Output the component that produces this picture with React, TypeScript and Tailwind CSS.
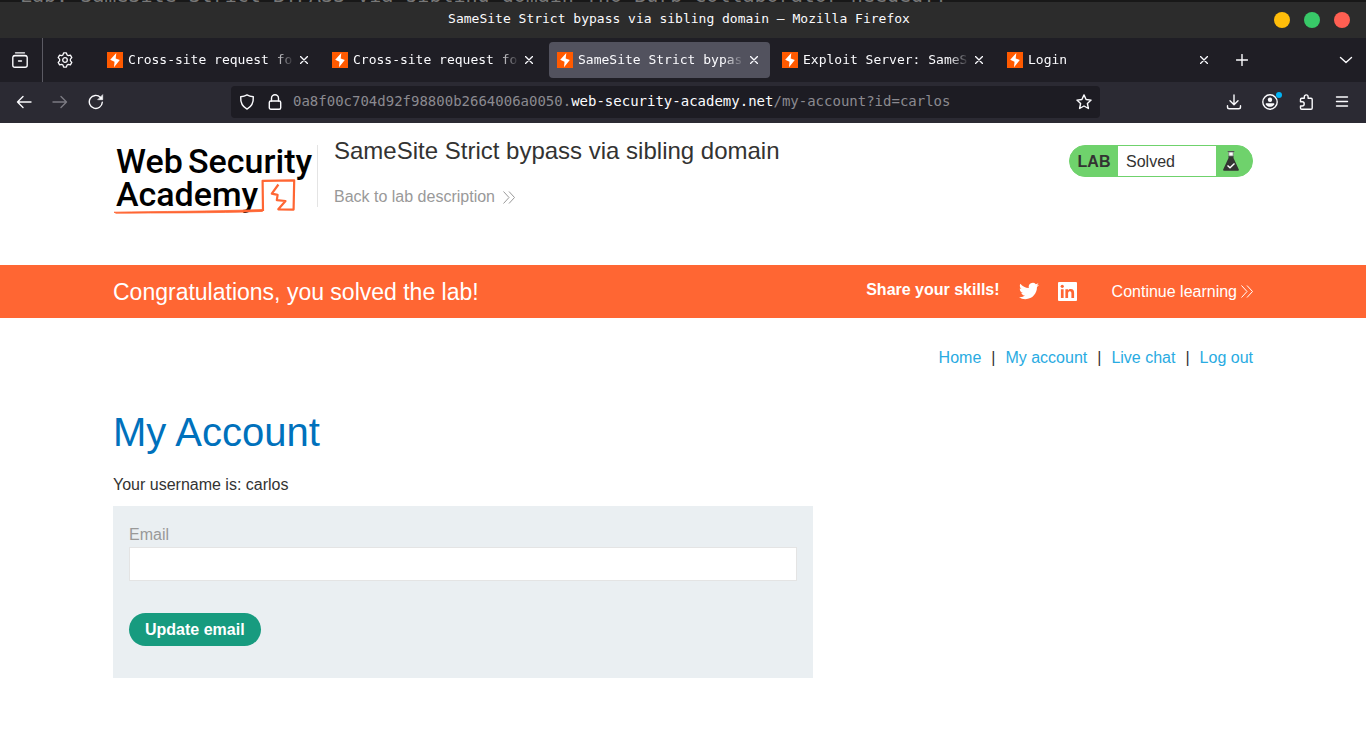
import React from "react";

const tabs = [
  { title: "Cross-site request fo", active: false },
  { title: "Cross-site request fo", active: false },
  { title: "SameSite Strict bypas", active: true },
  { title: "Exploit Server: SameS", active: false },
  { title: "Login", active: false },
];

const iconProps = {
  fill: "none",
  stroke: "currentColor",
  strokeWidth: 1.4,
  strokeLinecap: "round" as const,
  strokeLinejoin: "round" as const,
  "aria-hidden": true,
};

function Icon({ children }: { children: React.ReactNode }) {
  return (
    <svg viewBox="0 0 16 16" className="size-4 shrink-0" {...iconProps}>
      {children}
    </svg>
  );
}

function IconButton({ label, className = "", children }: { label: string; className?: string; children: React.ReactNode }) {
  return (
    <button type="button" aria-label={label} className={"flex size-8 shrink-0 items-center justify-center " + className}>
      {children}
    </button>
  );
}

function Favicon() {
  return (
    <svg viewBox="0 0 16 16" className="size-4 shrink-0" aria-hidden="true">
      <rect width="16" height="16" fill="#ff5a00" />
      <path d="M9.300 1 8.700 6.400 12.800 8.100 7 15.200 7.500 9.800 3.200 7.700z" fill="#fff" />
    </svg>
  );
}

function Chevrons() {
  return (
    <svg viewBox="0 0 12 13" className="h-[13px] w-3 shrink-0" fill="none" stroke="currentColor" strokeWidth="1" aria-hidden="true">
      <path d="M.5.500 6 6.500.5 12.500M6 .5l5.500 6-5.500 6" />
    </svg>
  );
}

function TabStrip() {
  return (
    <div className="flex h-11 items-center bg-[#1f1e25]">
      <div className="flex h-full w-[43px] shrink-0 items-center border-r border-[#5b5a63] pl-1">
        <IconButton label="View recent browsing">
          <Icon>
            <path d="M3.500.800h9M1.500 4.200C1.700 3.600 2.300 3.300 3 3.300h10c.7 0 1.300.3 1.500.9" strokeWidth="1.300" />
            <path d="M.8 5.500q0-1.600 1.600-1.600h11.200q1.600 0 1.600 1.600v7.800q0 2-2 2H2.800q-2 0-2-2z" />
            <path d="M6.500 9h3" />
          </Icon>
        </IconButton>
      </div>
      <IconButton label="Pinned settings tab" className="ml-1.5 mr-4">
        <Icon>
          <path d="M6.600.9h2.800l.6 2 1.400.8 2-.5 1.400 2.400-1.400 1.500v1.800l1.400 1.500-1.400 2.400-2-.5-1.400.8-.6 2H6.600l-.6-2-1.400-.8-2 .5-1.400-2.400 1.400-1.500V7.100L1.200 5.600l1.400-2.400 2 .5L6 2.900z" strokeWidth="1.300" />
          <circle cx="8" cy="8" r="2.300" strokeWidth="1.300" />
        </Icon>
      </IconButton>
      <div role="tablist" className="flex min-w-0 flex-1 items-center">
        {tabs.map((tab, i) => (
          <div
            key={i}
            className={
              "mx-0.5 flex h-9 min-w-0 max-w-[221px] flex-1 items-center rounded pl-2 pr-1.5 " +
              (tab.active ? "bg-[#52525e]" : "")
            }
          >
            <button type="button" role="tab" aria-selected={tab.active} className="flex min-w-0 flex-1 items-center gap-[5px]">
              <Favicon />
              <span className="min-w-0 flex-1 overflow-hidden whitespace-nowrap text-left text-[13px] leading-5 [mask-image:linear-gradient(to_right,black_calc(100%-20px),transparent)]">
                {tab.title}
              </span>
            </button>
            <button type="button" aria-label="Close tab" className="flex size-5 shrink-0 items-center justify-center">
              <svg viewBox="0 0 8 8" className="size-2" {...iconProps}>
                <path d="m.5.500 7 7m0-7-7 7" />
              </svg>
            </button>
          </div>
        ))}
        <IconButton label="Open a new tab" className="ml-1">
          <svg viewBox="0 0 12 12" className="size-3" {...iconProps}>
            <path d="M6 .500v11M.500 6h11" />
          </svg>
        </IconButton>
      </div>
      <IconButton label="List all tabs" className="mr-1">
        <Icon>
          <path d="m2.500 5.500 5.500 5 5.500-5" />
        </Icon>
      </IconButton>
    </div>
  );
}

function Toolbar() {
  return (
    <div className="flex h-[41px] items-start bg-[#2b2a33] px-2 pt-1">
      <div className="flex gap-1">
        <IconButton label="Back">
          <Icon><path d="M15 8H1.500M7 2.500 1.500 8 7 13.500" /></Icon>
        </IconButton>
        <IconButton label="Forward" className="text-[#7b7a82]">
          <Icon><path d="M1 8h13.500M9 2.500 14.500 8 9 13.500" /></Icon>
        </IconButton>
        <IconButton label="Reload">
          <Icon>
            <path d="M14.300 8.200A6.500 6.500 0 1 1 12.500 3.400" />
            <path d="M14.700 1v4.700H10z" fill="currentColor" strokeWidth=".6" />
          </Icon>
        </IconButton>
      </div>
      <div className="ml-[119px] mr-[118px] flex h-8 min-w-0 flex-1 items-center rounded bg-[#1d1c23] pr-2">
        <span className="flex w-[62px] shrink-0 items-center gap-3 pl-2">
          <Icon><path d="M8 .9c2 1.200 4.300 1.700 6.300 1.900.3 5.200-1.700 9.900-6.300 12.300C3.400 12.700 1.400 8 1.700 2.800 3.700 2.600 6 2.100 8 .9z" /></Icon>
          <Icon>
            <rect x="2.300" y="7" width="11.400" height="8.200" rx="1.500" />
            <path d="M4.500 7V4.300a3.500 3.500 0 0 1 7 0V7" />
          </Icon>
        </span>
        <span className="min-w-0 flex-1 overflow-hidden whitespace-nowrap pb-0.5 text-[14px] leading-5 text-[#8b8a90]">
          0a8f00c704d92f98800b2664006a0050.<span className="text-[#fbfbfe]">web-security-academy.net</span>/my-account?id=carlos
        </span>
        <button type="button" aria-label="Bookmark this page">
          <Icon><path d="m8 .900 2.100 4.600 5 .6-3.700 3.400 1 5L8 12l-4.400 2.500 1-5L.9 6.100l5-.6z" /></Icon>
        </button>
      </div>
      <div className="flex gap-1">
        <IconButton label="Downloads">
          <Icon><path d="M8 1v9.500M4 6.800l4 4 4-4M1.500 11.800v1.200q0 1.800 1.800 1.800h9.400q1.800 0 1.800-1.800v-1.200" /></Icon>
        </IconButton>
        <IconButton label="Account" className="relative">
          <Icon>
            <circle cx="8" cy="8" r="7.200" />
            <circle cx="8" cy="5.800" r="2.200" fill="currentColor" stroke="none" />
            <path d="M3.800 9.300h8.400v1.200c-1 1.600-2.500 2.300-4.200 2.300s-3.200-.7-4.200-2.300z" fill="currentColor" stroke="none" />
          </Icon>
          <span className="absolute right-1 top-1.5 size-1.5 rounded-full bg-[#00b3f4]" />
        </IconButton>
        <IconButton label="Extensions">
          <Icon><path d="M2.500 7V5.500q0-1.200 1.200-1.200h2.600V2.800a1.900 1.900 0 0 1 3.800 0v1.500h2.900q1.200 0 1.200 1.200v8.500q0 1.200-1.200 1.200H3.700q-1.200 0-1.200-1.200v-2h1.600a2 2 0 0 0 0-4.200H2.500z" /></Icon>
        </IconButton>
        <IconButton label="Open application menu">
          <Icon><path d="M2.500 3h11M2.500 7.500h11M2.500 12h11" /></Icon>
        </IconButton>
      </div>
    </div>
  );
}

function AcademyLogo() {
  return (
    <a href="#academy" aria-label="Web Security Academy" className="block">
      <svg viewBox="0 0 205 72" className="h-[72px] w-[205px]" aria-hidden="true">
        <g fill="#000" fontFamily="Roboto, sans-serif" fontWeight="500" fontSize="34">
          <text x="3" y="28">Web</text>
          <text x="75" y="28">Security</text>
          <text x="3" y="61">Academy</text>
        </g>
        <path d="M1 67.200c45-.9 97-.7 148.500-2.700v1.900C101 68.300 47 67.700 3 68.200z" fill="#ff6633" stroke="#ff6633" strokeWidth=".8" />
        <path d="M150 66 149.600 35.800 181.200 35.300 180.600 64.600 165.300 64.300 172.500 56 163.800 55.200 164.600 49.800 158.800 48.600 165.400 39.500" fill="none" stroke="#ff6633" strokeWidth="2.200" strokeLinejoin="round" />
      </svg>
    </a>
  );
}

export default function App() {
  return (
    <div className="min-h-screen bg-white font-['Liberation_Sans',Arial,sans-serif] text-base text-[#333332]">
      <div className="font-['DejaVu_Sans_Mono','Liberation_Mono',monospace] text-[#fbfbfe]">
        <div className="flex h-0.5 items-end overflow-hidden bg-[#181818] pl-5" aria-hidden="true">
          <span className="whitespace-nowrap text-[20px] leading-[14px] text-[#777]">
            Lab: SameSite Strict BYPASS via sibling domain [no Burp Collaborator needed!!
          </span>
        </div>
        <div className="flex h-9 items-center bg-[#2c2c2c] pr-4">
          <div className="flex-1 pb-0.5 pl-[84px] text-center text-[13px] leading-5">SameSite Strict bypass via sibling domain — Mozilla Firefox</div>
          <div className="flex gap-3.5">
            <button type="button" aria-label="Minimize" className="size-4 rounded-full bg-[#ffbd0a]" />
            <button type="button" aria-label="Maximize" className="size-4 rounded-full bg-[#38c968]" />
            <button type="button" aria-label="Close" className="size-4 rounded-full bg-[#ff5f52]" />
          </div>
        </div>
        <TabStrip />
        <Toolbar />
      </div>

      <header className="mx-auto flex h-[142px] max-w-[1140px] items-start pt-3">
        <div className="mt-2.5 h-[62px] w-[205px] shrink-0 border-r border-[#e4e4e4]">
          <AcademyLogo />
        </div>
        <div className="flex-1 pl-4">
          <h2 className="text-[24px] leading-8">SameSite Strict bypass via sibling domain</h2>
          <a href="#lab" className="mt-[18px] inline-flex items-center gap-2 text-[#999]">
            Back to lab description
            <Chevrons />
          </a>
        </div>
        <div className="mt-2.5 flex h-8 w-[184px] items-stretch overflow-hidden rounded-full border border-[#6fd26c] bg-[#6fd26c]">
          <span className="flex w-12 items-center justify-center pt-0.5 font-bold">LAB</span>
          <span className="flex flex-1 items-center bg-white pl-2 pt-0.5">Solved</span>
          <span className="flex w-9 items-center pl-[7px]">
            <svg viewBox="0 0 16 20" className="h-5 w-4" aria-hidden="true">
              <path d="M5.500 5h5v2l5.300 11.500q.3 1.200-.8 1.200H1q-1.100 0-.8-1.200L5.500 7z" fill="#333332" />
              <path d="M5.800 1h4.400v4H5.800z" fill="#fff" stroke="#777" strokeWidth=".8" />
              <path d="M4.700.500h6.600" stroke="#555" strokeWidth="1" />
              <path d="m4.500 14.500 2.500 2.300 4.500-4.300" fill="none" stroke="#fff" strokeWidth="1.400" />
            </svg>
          </span>
        </div>
      </header>

      <section className="bg-[#ff6633] text-white">
        <div className="mx-auto flex h-[53px] max-w-[1140px] items-center">
          <h4 className="flex-1 text-[23px] leading-8">Congratulations, you solved the lab!</h4>
          <span className="pb-1 font-bold">Share your skills!</span>
          <a href="#twitter" aria-label="Share on Twitter" className="ml-[19px] pb-0.5">
            <svg viewBox="0 0 24 24" className="size-5" fill="currentColor" aria-hidden="true">
              <path d="M23.950 4.570a10 10 0 0 1-2.820.770 4.960 4.960 0 0 0 2.160-2.720c-.950.550-2 .960-3.120 1.190a4.920 4.920 0 0 0-8.390 4.480C7.690 8.090 4.070 6.130 1.640 3.160a4.820 4.820 0 0 0-.660 2.480c0 1.710.870 3.210 2.190 4.100a4.900 4.900 0 0 1-2.230-.620v.060a4.920 4.920 0 0 0 3.950 4.830 5 5 0 0 1-2.210.080 4.940 4.940 0 0 0 4.600 3.420A9.870 9.870 0 0 1 0 19.540a13.990 13.990 0 0 0 7.560 2.210c9.050 0 14-7.500 14-13.980 0-.210 0-.420-.020-.630a9.940 9.940 0 0 0 2.460-2.550z" />
            </svg>
          </a>
          <a href="#linkedin" aria-label="Share on LinkedIn" className="ml-[19px]">
            <svg viewBox="0 0 19 19" className="size-[19px]" aria-hidden="true">
              <rect width="19" height="19" rx="1" fill="#fff" />
              <path d="M2.900 7.200h2.700V16H2.900zM7.400 7.200H10v1.200c.6-1 1.500-1.400 2.700-1.400 2.600 0 3.400 1.600 3.400 4v5h-2.700v-4.500c0-1.300-.2-2.300-1.600-2.300-1.300 0-1.700 1-1.700 2.300V16H7.400z" fill="#ff6633" />
              <circle cx="4.250" cy="4.300" r="1.600" fill="#ff6633" />
            </svg>
          </a>
          <a href="#continue" className="ml-[35px] flex items-center gap-1">
            Continue learning
            <Chevrons />
          </a>
        </div>
      </section>

      <main className="mx-auto max-w-[1140px] pt-7">
        <nav className="flex justify-end gap-2.5">
          <a href="#home" className="text-[#29abe2]">Home</a>
          <span>|</span>
          <a href="#account" className="text-[#29abe2]">My account</a>
          <span>|</span>
          <a href="#chat" className="text-[#29abe2]">Live chat</a>
          <span>|</span>
          <a href="#logout" className="text-[#29abe2]">Log out</a>
        </nav>
        <h1 className="mt-9 text-[40px] leading-[52px] text-[#0071bc]">My Account</h1>
        <p className="mt-[15px]">Your username is: carlos</p>
        <form className="mt-[9px] max-w-[700px] bg-[#eaeff2] px-4 pb-8 pt-[17px]" onSubmit={(e) => e.preventDefault()}>
          <label htmlFor="email" className="block text-[#999]">Email</label>
          <input id="email" type="email" className="block h-[34px] w-full border border-[#e4e4e4] bg-white px-2 outline-none" />
          <button type="submit" className="mt-8 block h-[33px] rounded-full bg-[#179b7f] px-4 font-bold text-white">Update email</button>
        </form>
      </main>
    </div>
  );
}
